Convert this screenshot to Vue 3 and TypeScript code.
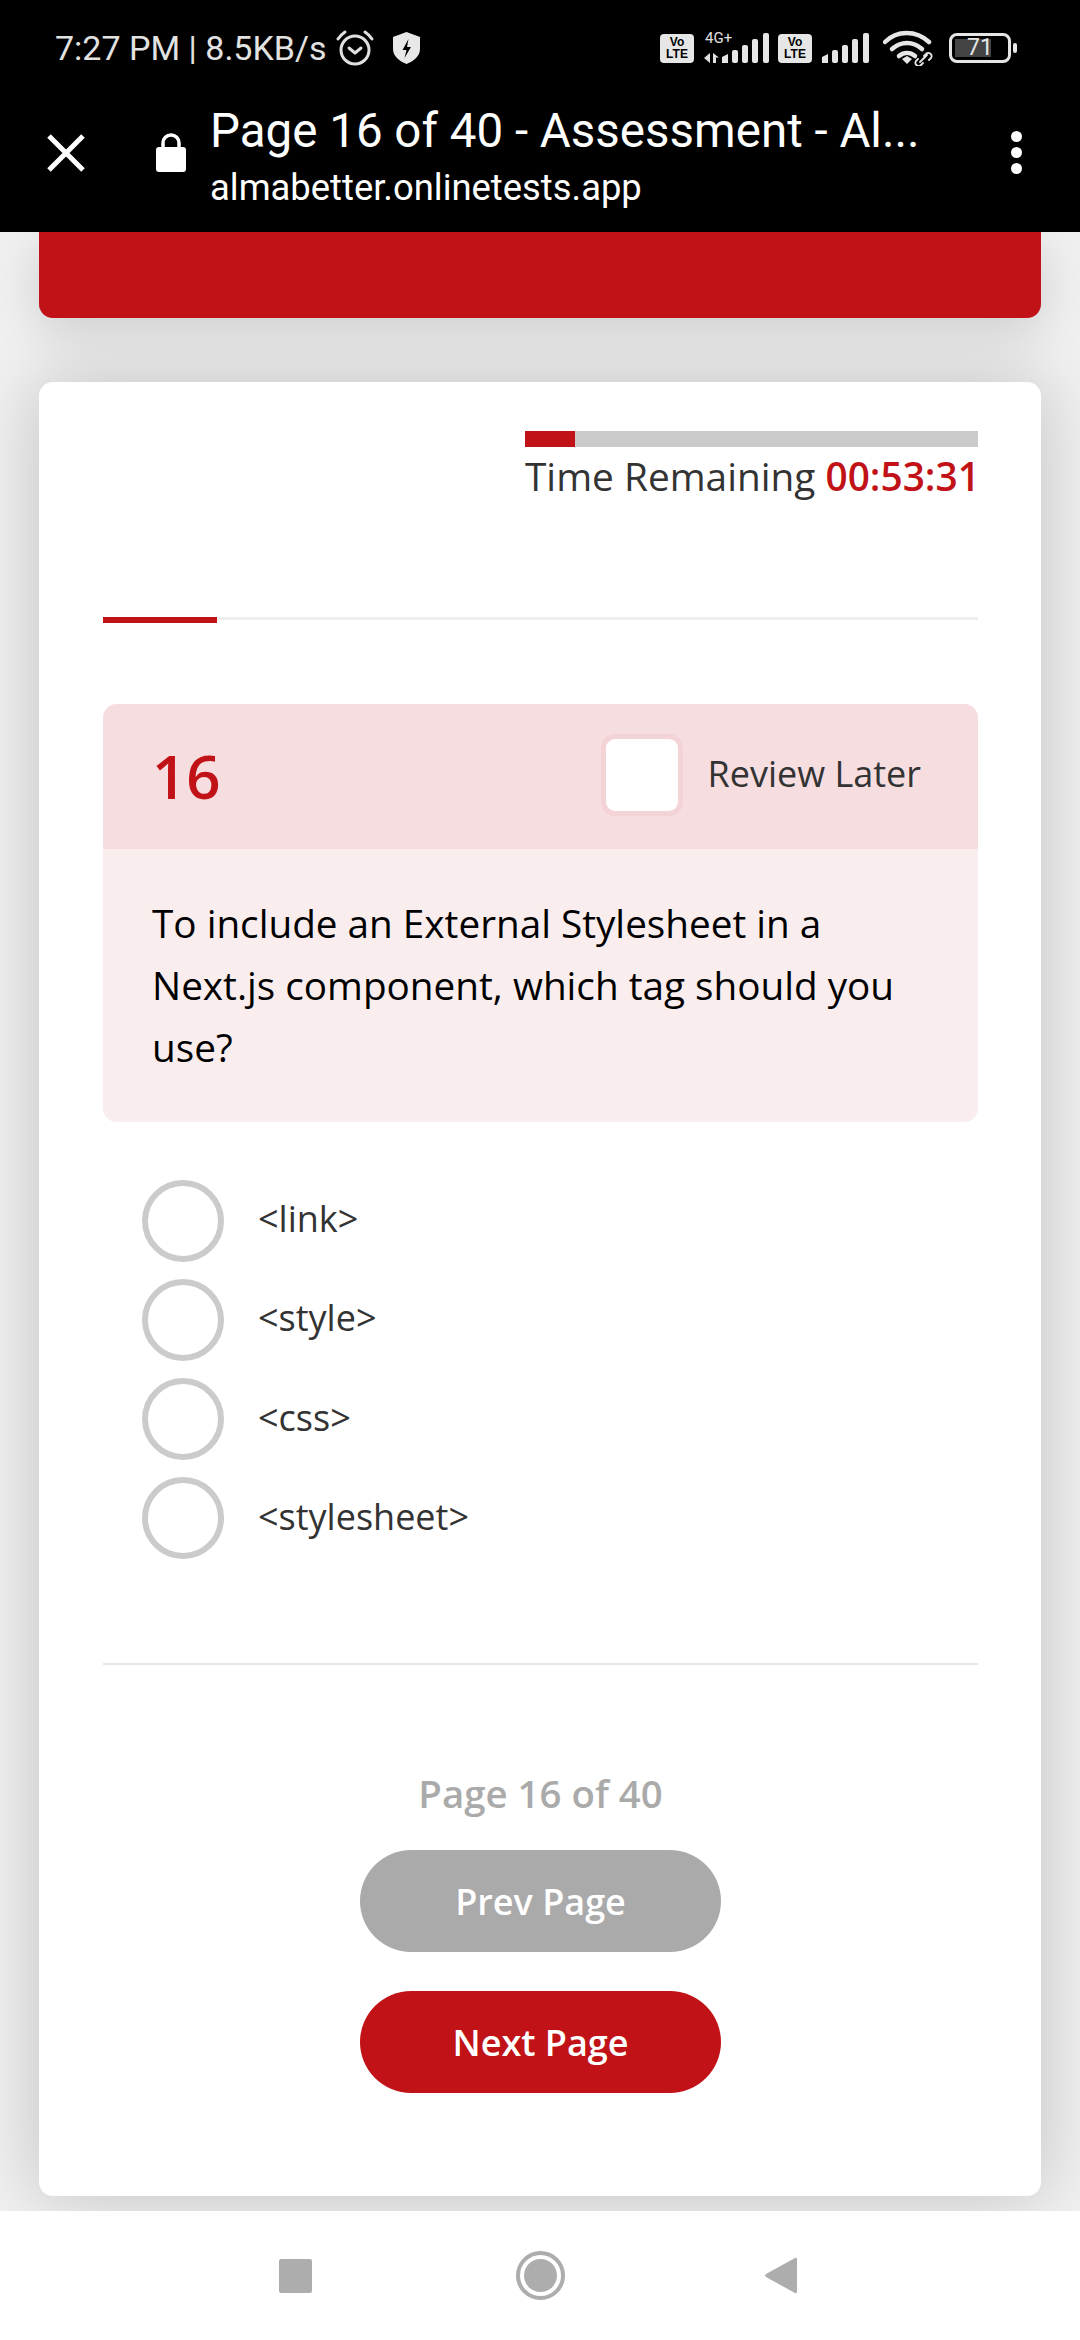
<script setup lang="ts">
const options = ['<link>', '<style>', '<css>', '<stylesheet>']
const timeProgress = 11
const pageProgress = 13
</script>

<template>
  <div class="screen">
    <header class="top">
      <div class="status">
        <span class="clock">7:27 PM | 8.5KB/s</span>
        <svg class="alarm" viewBox="0 0 40 36" fill="none" stroke="#e0e0e0">
          <circle cx="20" cy="20" r="14" stroke-width="3" />
          <path d="M14 18l6 5 6-5" stroke-width="3" stroke-linecap="round" stroke-linejoin="round" />
          <path d="M3 9c2-3 4-5 7-7M37 9c-2-3-4-5-7-7" stroke-width="3" stroke-linecap="round" />
        </svg>
        <svg class="shield" viewBox="0 0 27 32">
          <path d="M13.5 0L27 5v12c0 7-6 12-13.500 15C6 29 0 24 0 17V5z" fill="#e8e8e8" />
          <path d="M15.500 7l-6 11h4l-2 8 6.500-11h-4z" fill="#000" />
        </svg>
        <div class="status-right">
          <div class="volte"><span>Vo</span><span>LTE</span></div>
          <div class="net">
            <span class="net-label">4G+</span>
            <svg class="net-arrows" viewBox="0 0 17 10" fill="#e0e0e0">
              <path d="M6 0v10L0 5zM9 0l6 4.500h-3V10H9z" />
            </svg>
          </div>
          <svg class="bars bars-a" viewBox="0 0 47 30" fill="#e6e6e6">
            <path d="M0 24l6-3v9H0z" />
            <rect x="10" y="17" width="6" height="13" rx="2" />
            <rect x="20" y="12" width="6" height="18" rx="2" />
            <rect x="30" y="6" width="6" height="24" rx="2" />
            <rect x="41" y="0" width="6" height="30" rx="2" />
          </svg>
          <div class="volte second"><span>Vo</span><span>LTE</span></div>
          <svg class="bars bars-b" viewBox="0 0 47 30" fill="#e6e6e6">
            <path d="M0 24l6-3v9H0z" />
            <rect x="10" y="17" width="6" height="13" rx="2" />
            <rect x="20" y="12" width="6" height="18" rx="2" />
            <rect x="30" y="6" width="6" height="24" rx="2" />
            <rect x="41" y="0" width="6" height="30" rx="2" />
          </svg>
          <svg class="wifi" viewBox="0 0 51 36" fill="none" stroke="#e6e6e6" stroke-linecap="round">
            <path d="M2 12C14 0 33 0 46 12" stroke-width="4.500" />
            <path d="M9 19c9-8 21-8 30 0" stroke-width="4.500" />
            <path d="M16 26c5-4 11-4 16 0" stroke-width="4.500" />
            <path d="M19 29l5-3 5 3-5 5z" fill="#e6e6e6" stroke="none" />
            <path d="M37 32l7-7M35 29l-2 2c-2 3 2 7 5 4l2-2M46 30l2-2c2-3-2-7-5-4l-2 2" stroke-width="1.800" />
          </svg>
          <div class="battery">
            <div class="battery-body">
              <div class="battery-fill"></div>
              <span class="battery-num">71</span>
            </div>
            <div class="battery-tip"></div>
          </div>
        </div>
      </div>
      <div class="browser">
        <svg class="close" viewBox="0 0 38 38" stroke="#fff" stroke-width="5">
          <path d="M2 2l34 34M36 2L2 36" />
        </svg>
        <svg class="lock" viewBox="0 0 30 39">
          <path d="M7 16V10a8 8 0 0 1 16 0v6" fill="none" stroke="#fff" stroke-width="3.500" />
          <rect x="0" y="14" width="30" height="25" rx="3" fill="#fff" />
        </svg>
        <div class="browser-text">
          <div class="page-title">Page 16 of 40 - Assessment - Al...</div>
          <div class="page-url">almabetter.onlinetests.app</div>
        </div>
        <div class="menu"><i></i><i></i><i></i></div>
      </div>
    </header>

    <main class="page">
      <div class="banner"></div>
      <section class="card">
        <div class="timer">
          <div class="timer-track">
            <div class="timer-fill" :style="{ width: timeProgress + '%' }"></div>
          </div>
          <div class="timer-text">Time Remaining <b>00:53:31</b></div>
        </div>

        <div class="progress">
          <div class="progress-fill" :style="{ width: pageProgress + '%' }"></div>
        </div>

        <div class="question">
          <div class="question-head">
            <span class="question-no">16</span>
            <label class="review">
              <span class="review-box"></span>
              <span class="review-label">Review Later</span>
            </label>
          </div>
          <p class="question-text">To include an External Stylesheet in a Next.js component, which tag should you use?</p>
        </div>

        <ul class="options">
          <li v-for="opt in options" :key="opt" class="option">
            <span class="radio"></span>
            <span class="option-label">{{ opt }}</span>
          </li>
        </ul>

        <div class="rule"></div>

        <div class="pager">
          <div class="pager-count">Page 16 of 40</div>
          <button class="btn btn-prev">Prev Page</button>
          <button class="btn btn-next">Next Page</button>
        </div>
      </section>
    </main>

    <footer class="nav">
      <div class="nav-square"></div>
      <div class="nav-home"><div></div></div>
      <svg class="nav-back" viewBox="0 0 32 37">
        <path d="M30 1a1.500 1.500 0 0 1 2 1v33a1.500 1.500 0 0 1-2 1L1 20a2 2 0 0 1 0-3z" fill="#adadad" />
      </svg>
    </footer>
  </div>
</template>

<style scoped>
.screen {
  width: 1080px;
  height: 2340px;
  display: flex;
  flex-direction: column;
  overflow: hidden;
  font-family: "Open Sans", sans-serif;
}

.top {
  height: 232px;
  flex: none;
  background: #000;
  position: relative;
  z-index: 3;
  font-family: Roboto, sans-serif;
}

.status {
  height: 96px;
  display: flex;
  align-items: center;
  padding: 0 0 0 55px;
  box-sizing: border-box;
}
.clock {
  font-size: 34px;
  color: #e2e2e2;
  white-space: nowrap;
}
.alarm { width: 40px; height: 36px; margin-left: 8px; }
.shield { width: 27px; height: 32px; margin-left: 18px; }

.status-right {
  position: relative;
  margin-left: auto;
  width: 357px;
  margin-right: 63px;
  height: 40px;
  display: flex;
  align-items: center;
}
.volte {
  width: 34px;
  height: 29px;
  flex: none;
  background: #e6e6e6;
  border-radius: 4px;
  color: #000;
  font-family: "Liberation Sans", sans-serif;
  font-weight: 700;
  font-size: 12px;
  line-height: 12px;
  display: flex;
  flex-direction: column;
  align-items: center;
  justify-content: center;
}
.volte.second { margin-left: 9px; }
.net {
  width: 19px;
  height: 30px;
  flex: none;
  margin-left: 10px;
  position: relative;
}
.net-label {
  position: absolute;
  left: 1px;
  top: -4px;
  font-size: 15px;
  color: #e0e0e0;
}
.net-arrows {
  position: absolute;
  left: 0;
  bottom: 0;
  width: 17px;
  height: 10px;
}
.bars { height: 30px; width: 47px; flex: none; }
.bars-a { margin-left: -1px; }
.bars-b { margin-left: 10px; }
.wifi { width: 51px; height: 36px; margin-left: 14px; flex: none; }
.battery {
  display: flex;
  align-items: center;
  margin-left: 15px;
  flex: none;
}
.battery-body {
  position: relative;
  width: 62px;
  height: 30px;
  box-sizing: border-box;
  border: 3px solid #e6e6e6;
  border-radius: 8px;
}
.battery-fill {
  position: absolute;
  left: 3px;
  top: 3px;
  bottom: 3px;
  width: 36px;
  background: #444;
}
.battery-num {
  position: absolute;
  left: 15px;
  top: -1px;
  font-size: 23px;
  line-height: 26px;
  color: #e6e6e6;
}
.battery-tip {
  width: 4px;
  height: 10px;
  margin-left: 2px;
  background: #e6e6e6;
  border-radius: 2px;
}

.browser {
  height: 136px;
  display: flex;
  align-items: flex-start;
  padding-left: 47px;
  color: #fff;
}
.close { width: 38px; height: 38px; margin-top: 38px; flex: none; }
.lock { width: 30px; height: 39px; margin-left: 71px; margin-top: 37px; flex: none; }
.browser-text { margin-left: 24px; width: 771px; }
.page-title {
  font-size: 47.500px;
  line-height: 54px;
  margin-top: 8px;
  white-space: nowrap;
}
.page-url {
  font-size: 36.400px;
  line-height: 44px;
  margin-top: 8px;
  white-space: nowrap;
}
.menu {
  margin-left: 30px;
  margin-top: 35px;
  display: flex;
  flex-direction: column;
  gap: 5px;
}
.menu i {
  display: block;
  width: 11px;
  height: 11px;
  border-radius: 50%;
  background: #fff;
}

.page {
  flex: 1;
  min-height: 0;
  background: #f0f0f0;
  padding: 0 39px;
  overflow: hidden;
}
.banner {
  height: 86px;
  background: #c11317;
  border-radius: 0 0 14px 14px;
  position: relative;
  z-index: 1;
  box-shadow: 0 14px 50px rgba(0, 0, 0, 0.14);
}
.card {
  margin-top: 64px;
  height: 1814px;
  box-sizing: border-box;
  background: #fff;
  border-radius: 14px;
  padding: 49px 63px 0 64px;
  box-shadow: 0 0 70px rgba(0, 0, 0, 0.2);
}

.timer {
  width: 453px;
  margin-left: auto;
}
.timer-track { height: 16px; background: #cbcbcb; }
.timer-fill { height: 100%; background: #c11317; }
.timer-text {
  font-size: 38.800px;
  line-height: 50px;
  color: #333;
  white-space: nowrap;
  margin-top: 4px;
}
.timer-text b { color: #c11317; font-weight: 600; }

.progress {
  height: 3px;
  background: #eee;
  margin-top: 116px;
  position: relative;
}
.progress-fill {
  height: 6px;
  background: #c11317;
}

.question {
  margin-top: 84px;
  background: #f9edee;
  border-radius: 14px;
  overflow: hidden;
  height: 418px;
}
.question-head {
  height: 145px;
  background: #f6dde0;
  display: flex;
  align-items: center;
  justify-content: space-between;
  padding: 0 57px 0 49px;
}
.question-no {
  font-size: 60px;
  font-weight: 600;
  color: #c11317;
  margin-top: -2px;
}
.review {
  display: flex;
  align-items: center;
  gap: 24px;
  margin-top: -3px;
}
.review-box {
  width: 82px;
  height: 82px;
  flex: none;
  box-sizing: border-box;
  background: #fff;
  border: 5px solid #f3d3d6;
  border-radius: 14px;
}
.review-label {
  font-size: 36px;
  color: #333;
  position: relative;
  top: -2px;
}
.question-text {
  margin: 0;
  padding: 43px 70px 0 49px;
  font-size: 38.700px;
  line-height: 62px;
  color: #000;
}

.options {
  list-style: none;
  margin: 57.500px 0 0;
  padding: 0 0 0 39px;
}
.option {
  display: flex;
  align-items: center;
  height: 82px;
  margin-bottom: 17.300px;
}
.radio {
  width: 82px;
  height: 82px;
  box-sizing: border-box;
  border: 6px solid #cbcbcb;
  border-radius: 50%;
  flex: none;
}
.option-label {
  margin-left: 34px;
  font-size: 36px;
  color: #333;
  position: relative;
  top: -2px;
}

.rule {
  height: 2px;
  background: #e6e6e6;
  margin-top: 104px;
}

.pager {
  display: flex;
  flex-direction: column;
  align-items: center;
  margin-top: 103px;
}
.pager-count {
  font-size: 38.400px;
  line-height: 50px;
  font-weight: 600;
  color: #aaa;
}
.btn {
  width: 361px;
  height: 102px;
  border: 0;
  border-radius: 51px;
  color: #fff;
  font-family: inherit;
  font-size: 36px;
  font-weight: 600;
  padding: 0;
}
.btn-prev { background: #aaa; margin-top: 32px; }
.btn-next { background: #c11317; margin-top: 39px; }

.nav {
  position: relative;
  z-index: 2;
  height: 129px;
  flex: none;
  background: #fff;
  display: flex;
  align-items: center;
}
.nav-square {
  width: 33px;
  height: 34px;
  background: #adadad;
  border-radius: 2px;
  margin-left: 279px;
}
.nav-home {
  width: 49px;
  height: 49px;
  box-sizing: border-box;
  border: 4px solid #adadad;
  border-radius: 50%;
  margin-left: 204px;
  display: flex;
  align-items: center;
  justify-content: center;
}
.nav-home div {
  width: 33px;
  height: 33px;
  border-radius: 50%;
  background: #adadad;
}
.nav-back {
  width: 32px;
  height: 37px;
  margin-left: 200px;
}
</style>

<style>
html, body { margin: 0; background: #fff; }
</style>
